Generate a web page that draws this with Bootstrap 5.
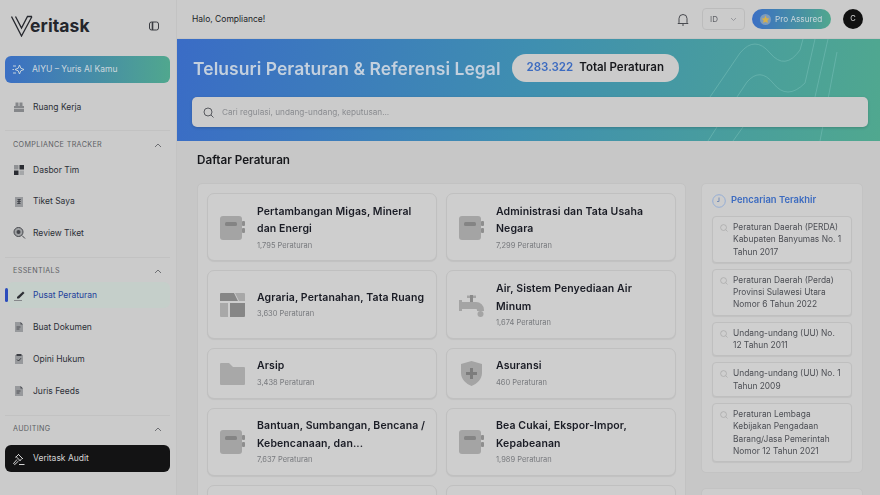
<!DOCTYPE html>
<html lang="id">
<head>
<meta charset="utf-8">
<title>Veritask</title>
<link href="https://cdn.jsdelivr.net/npm/bootstrap@5.3.0/dist/css/bootstrap.min.css" rel="stylesheet">
<style>
html,body{height:495px;overflow:hidden;background:#c8c8c8}
body{font-family:Inter,"Noto Sans",sans-serif;color:#1b1e27;font-size:10px}
.app-shell{height:495px;overflow:hidden;filter:blur(.45px)}
.side-bar{width:177px;flex:0 0 177px;background:#cbcbcb;padding:0 6px 0 5px;border-right:1px solid #c3c3c3}
.logo-row{height:52px;margin-bottom:4px;padding:0 11px 0 6px}
.logo-word{font-size:17.5px;font-weight:700;letter-spacing:.1px;margin-left:-3px;color:#24262c;line-height:1}
.ai-btn{height:27px;flex:none;border-radius:6px;background:linear-gradient(90deg,#3b6fc4,#50a78e);color:#cdd8df;font-size:8.5px;font-weight:400;padding-left:7px;gap:7px}
.nav-row{height:26px;flex:none;padding-left:7px;gap:7px;font-size:8.5px;font-weight:400;color:#2c2f37;border-radius:6px;position:relative;margin-bottom:6px}
.nav-row svg{width:14px;height:14px;flex:none}
.nav-first{margin-top:11px;margin-bottom:10px}
.nav-tight{margin-bottom:5.5px}
.nav-on{background:#c5cfca;color:#23409a;margin-left:2px;padding-left:5px;margin-top:-1.5px}
.nav-on::before{content:"";position:absolute;left:-2px;top:6px;width:3px;height:14px;background:#2c4cbc;border-radius:2px}
.nav-dark{background:#131314;color:#d5d5d5;height:27px;margin:3.5px 0 0}
.sect-head{padding:2px 8px 0;border-top:1px solid #c2c2c2;height:27px;flex:none;font-size:7.2px;letter-spacing:.35px;color:#5d5f64}
.sect-gap{margin-bottom:10.5px}
.sect-tail{height:10.5px;flex:none}
.top-bar{height:39px;flex:none;background:#cbcbcb;padding:0 17px 0 15px;font-size:8.5px;font-weight:400;border-bottom:1px solid #c4c4c4}
.lang-box{width:43px;height:22px;border:1px solid #bcbcbc;border-radius:4px;color:#606268;padding:0 7px;margin:0 7px 0 13px;font-size:8px}
.pro-pill{width:79px;height:20px;border-radius:10px;background:linear-gradient(90deg,#3b6fc4,#50a78e);color:#cbd7dc;font-size:8.2px;padding-left:8px;gap:4px}
.avatar-dot{width:20px;height:20px;border-radius:50%;background:#111;color:#d5d5d5;font-size:7.5px;margin-left:12px}
.hero-band{height:102px;flex:none;background:linear-gradient(100deg,#3a6cc6 0%,#3f8fb0 50%,#50a88f 100%);padding:15px 12px 14px 15px;position:relative;overflow:hidden}
.hero-lines{position:absolute;left:0;top:0;width:703px;height:102px}
.hero-title{font-size:17.5px;font-weight:600;color:#c3d0de;letter-spacing:.05px;line-height:28px;margin:2px 0 0 1px}
.total-pill{height:28px;border-radius:14px;background:#cbcbcb;margin-left:11px;padding:0 15px 0 15px;font-size:11.5px;font-weight:600;color:#17181c;gap:6px}
.total-pill b{font-weight:600;color:#3c6bc0}
.hero-row{position:relative;height:28px;margin-bottom:15px}
.search-box{position:relative;height:30px;background:#cbcbcb;border-radius:5px;box-shadow:0 1px 3px rgba(0,0,0,.18);padding-left:11px;gap:8px;color:#8a8c90;font-size:8.2px}
.body-zone{background:#c7c7c7;padding:0 17px 0 20px;flex:1;min-height:0;overflow:hidden}
.zone-title{font-size:11.7px;font-weight:600;color:#17181c;margin:0;height:42px;line-height:38px}
.cat-panel{width:489px;flex:none;background:#cdcdcd;border:1px solid #c2c2c2;border-radius:5px 5px 0 0;padding:9px 9px 0;height:400px}
.cat-grid{--bs-gutter-x:9px;--bs-gutter-y:9px}
.cat-card{height:100%;background:#cecece;border:1px solid #c0c0c0;border-radius:7px;box-shadow:0 1px 1px rgba(0,0,0,.06);padding:8.7px 8px 8.7px 12px;gap:12px}
.cat-card svg{width:25px;height:25px;flex:none}
.cat-name{font-size:10.5px;font-weight:600;line-height:17.5px;color:#1a1c25;letter-spacing:.1px}
.cat-count{font-size:7.5px;color:#77797d;line-height:12px;margin-top:2px}
.recent-col{width:162px;flex:none;margin-left:15px}
.recent-panel{background:#cdcdcd;border:1px solid #c3c3c3;border-radius:5px;padding:9px 10px 10px}
.recent-head{color:#3c6bc0;font-size:9.4px;font-weight:600;gap:5px;height:15px;margin-bottom:8px}
.recent-head svg{flex:none}
.recent-item{background:#cfcfcf;border:1px solid #bfbfbf;border-radius:4px;padding:4px 9px 4px 7px;gap:5px;font-size:8.4px;line-height:12.3px;color:#4c4e54;margin-bottom:6px;box-shadow:0 1px 1px rgba(0,0,0,.06)}
.recent-item:last-child{margin-bottom:0}
.recent-item svg{width:8px;height:8px;flex:none;margin-top:3px}
.next-panel{background:#cdcdcd;border:1px solid #c3c3c3;border-radius:5px;height:60px;margin-top:15px}
</style>
</head>
<body>
<div class="app-shell d-flex">
  <aside class="side-bar d-flex flex-column">
    <div class="logo-row d-flex align-items-center justify-content-between">
      <div class="d-flex align-items-center">
        <svg width="22" height="22" viewBox="0 0 22 22" fill="none" stroke="#26282e" stroke-width="1.3"><path d="M0.5 1.500 L10.500 21 L21 1.500 M4.500 1.500 L10.500 13 L16.500 1.500 H21"/></svg>
        <span class="logo-word">eritask</span>
      </div>
      <svg width="10" height="10" viewBox="0 0 10 10" fill="none" stroke="#3a3c42" stroke-width="1"><rect x=".5" y="1" width="9" height="8" rx="2"/><path d="M3.5 1v8" stroke-width="1.6"/></svg>
    </div>
    <div class="ai-btn d-flex align-items-center">
      <svg width="13" height="13" viewBox="0 0 13 13" fill="none" stroke="#d2dce0" stroke-width=".9"><path d="M7.5 2 L8.8 5.2 12 6.5 8.8 7.8 7.5 11 6.2 7.8 3 6.5 6.2 5.2Z"/><path d="M1 3h3M1 10h3M.5 6.5h1.5"/></svg>
      <span>AIYU – Yuris AI Kamu</span>
    </div>
    <div class="nav-row nav-first d-flex align-items-center">
      <svg viewBox="0 0 14 14" fill="#85878a"><path d="M2 6h1.500V2.500h3V6h1V2.500h3V6H12v6H2z"/><path d="M2 8.500h10" stroke="#c8c8c8" stroke-width=".7"/></svg>
      <span>Ruang Kerja</span>
    </div>
    <div class="sect-head d-flex align-items-center justify-content-between">
      <span>COMPLIANCE TRACKER</span>
      <svg width="8" height="5" viewBox="0 0 8 5" fill="none" stroke="#55575c" stroke-width=".8"><path d="M1 4 L4 1 L7 4"/></svg>
    </div>
    <div class="nav-row nav-tight d-flex align-items-center">
      <svg viewBox="0 0 14 14"><rect x="2" y="2" width="4.5" height="4.5" fill="#8f9194"/><rect x="7.5" y="2" width="4.5" height="4.5" fill="#2a2c32"/><rect x="2" y="7.5" width="4.5" height="4.5" fill="#2a2c32"/><rect x="7.5" y="7.5" width="4.5" height="4.5" fill="#a5a7a9"/></svg>
      <span>Dasbor Tim</span>
    </div>
    <div class="nav-row nav-tight d-flex align-items-center">
      <svg viewBox="0 0 14 14"><rect x="3" y="2" width="8" height="10" fill="#97999c"/><path d="M5.5 4.5h3l-3 2h3l-3 2h3" fill="none" stroke="#34363c" stroke-width=".8"/></svg>
      <span>Tiket Saya</span>
    </div>
    <div class="nav-row sect-gap d-flex align-items-center">
      <svg viewBox="0 0 14 14"><circle cx="6.5" cy="6" r="4.5" fill="#a0a2a4" stroke="#45474c" stroke-width="1"/><circle cx="6.5" cy="6" r="2" fill="#45474c"/><path d="M10 9.5 L13 12.5" stroke="#45474c" stroke-width="1"/></svg>
      <span>Review Tiket</span>
    </div>
    <div class="sect-head d-flex align-items-center justify-content-between">
      <span>ESSENTIALS</span>
      <svg width="8" height="5" viewBox="0 0 8 5" fill="none" stroke="#55575c" stroke-width=".8"><path d="M1 4 L4 1 L7 4"/></svg>
    </div>
    <div class="nav-row nav-on d-flex align-items-center">
      <svg viewBox="0 0 14 14"><path d="M5 9 L11 3.5 L12.5 5 L7 10.5 H5Z" fill="#2d2f35"/><path d="M2 12.5h8" stroke="#85878a" stroke-width="1"/></svg>
      <span>Pusat Peraturan</span>
    </div>
    <div class="nav-row d-flex align-items-center">
      <svg viewBox="0 0 14 14"><path d="M3 2h5.5L11 4.5V12H3Z" fill="#97999c"/><path d="M8.5 2 11 4.5H8.5Z" fill="#4b4d52"/><path d="M4.5 7h4M4.5 9h3" stroke="#3c3e44" stroke-width=".8"/></svg>
      <span>Buat Dokumen</span>
    </div>
    <div class="nav-row d-flex align-items-center">
      <svg viewBox="0 0 14 14"><rect x="3" y="3" width="8" height="9" fill="#97999c"/><rect x="4.5" y="2" width="5" height="2" fill="#3c3e44"/><path d="M5 7.5 L6.5 9 L9 6.2" fill="none" stroke="#2f3136" stroke-width=".9"/></svg>
      <span>Opini Hukum</span>
    </div>
    <div class="nav-row d-flex align-items-center mb-0">
      <svg viewBox="0 0 14 14"><path d="M3 2h5.5L11 4.5V12H3Z" fill="#97999c"/><path d="M8.5 2 11 4.5H8.5Z" fill="#4b4d52"/><path d="M4.5 7h4M4.5 9h3" stroke="#3c3e44" stroke-width=".8"/></svg>
      <span>Juris Feeds</span>
    </div>
    <div class="sect-tail"></div>
    <div class="sect-head d-flex align-items-center justify-content-between">
      <span>AUDITING</span>
      <svg width="8" height="5" viewBox="0 0 8 5" fill="none" stroke="#55575c" stroke-width=".8"><path d="M1 4 L4 1 L7 4"/></svg>
    </div>
    <div class="nav-row nav-dark d-flex align-items-center">
      <svg viewBox="0 0 14 14" fill="none" stroke="#d5d5d5" stroke-width="1"><path d="M6 2 L11 7 M4 4.5 L8.5 9 M6 3 L3.5 5.5 M10 6.5 L7.5 9 M5 7.5 L1.5 11.5 L2.8 12.5 L6.5 9 M7 12.5h5.5"/></svg>
      <span>Veritask Audit</span>
    </div>
  </aside>

  <main class="flex-grow-1 d-flex flex-column">
    <header class="top-bar d-flex align-items-center">
      <span class="me-auto">Halo, Compliance!</span>
      <svg width="12" height="13" viewBox="0 0 12 13" fill="none" stroke="#3a3c42" stroke-width=".9"><path d="M2 9.5 V5.5 a4 4 0 0 1 8 0 V9.5 L11 10.5 H1Z"/><path d="M5 12h2"/></svg>
      <div class="lang-box d-flex align-items-center justify-content-between">
        <span>ID</span>
        <svg width="7" height="5" viewBox="0 0 7 5" fill="none" stroke="#8a8c90" stroke-width=".8"><path d="M1 1 L3.5 3.5 L6 1"/></svg>
      </div>
      <div class="pro-pill d-flex align-items-center">
        <svg width="11" height="11" viewBox="0 0 11 11"><circle cx="5.5" cy="5.5" r="5.5" fill="#7d9bbd"/><path d="M5.5 1.6 L6.7 4.2 9.4 4.5 7.4 6.4 7.9 9.1 5.5 7.8 3.1 9.1 3.6 6.4 1.6 4.5 4.3 4.2Z" fill="#d7b04a"/></svg>
        <span>Pro Assured</span>
      </div>
      <div class="avatar-dot d-flex align-items-center justify-content-center">C</div>
    </header>

    <section class="hero-band">
      <svg class="hero-lines" viewBox="0 0 703 102" fill="none" stroke="#74bdb6" stroke-opacity=".6" stroke-width="1">
        <path d="M531 102 L540 88 M533 58 L563 14 Q578 -4 593 14 Q608 32 623 11 L626 0"/>
        <path d="M556 102 L566 88 M560 58 L570 43 Q583 28 596 44 Q610 62 628 44 L638 0"/>
        <path d="M638 58 L651 0"/>
        <path d="M643 102 L660 13"/>
      </svg>
      <div class="hero-row d-flex align-items-center">
        <h1 class="hero-title">Telusuri Peraturan &amp; Referensi Legal</h1>
        <div class="total-pill d-flex align-items-center"><b>283.322</b><span>Total Peraturan</span></div>
      </div>
      <div class="search-box d-flex align-items-center">
        <svg width="11" height="11" viewBox="0 0 11 11" fill="none" stroke="#4b4d52" stroke-width=".9"><circle cx="5" cy="5" r="4"/><path d="M8 8 L10.5 10.5"/></svg>
        <span>Cari regulasi, undang-undang, keputusan...</span>
      </div>
    </section>

    <div class="body-zone">
      <h2 class="zone-title">Daftar Peraturan</h2>
      <div class="d-flex align-items-start">
        <div class="cat-panel">
          <div class="row cat-grid">
            <div class="col-6"><div class="cat-card d-flex align-items-center">
              <svg viewBox="0 0 25 25"><rect x="0" y="1" width="22" height="24" rx="3" fill="#a4a4a4"/><rect x="5" y="7" width="12" height="4" rx="1.5" fill="#848484"/><rect x="22" y="6" width="3" height="5" rx="1" fill="#8e8e8e"/><rect x="22" y="13" width="3" height="5" rx="1" fill="#8e8e8e"/></svg>
              <div><div class="cat-name">Pertambangan Migas, Mineral dan Energi</div><div class="cat-count">1,795 Peraturan</div></div>
            </div></div>
            <div class="col-6"><div class="cat-card d-flex align-items-center">
              <svg viewBox="0 0 25 25"><rect x="0" y="1" width="22" height="24" rx="3" fill="#a4a4a4"/><rect x="5" y="7" width="12" height="4" rx="1.5" fill="#848484"/><rect x="22" y="6" width="3" height="5" rx="1" fill="#8e8e8e"/><rect x="22" y="13" width="3" height="5" rx="1" fill="#8e8e8e"/></svg>
              <div><div class="cat-name">Administrasi dan Tata Usaha Negara</div><div class="cat-count">7,299 Peraturan</div></div>
            </div></div>
            <div class="col-6"><div class="cat-card d-flex align-items-center">
              <svg viewBox="0 0 25 25"><path d="M0 2a1 1 0 0 1 1-1h13l4 8H0Z" fill="#868686"/><path d="M15 1h9a1 1 0 0 1 1 1v7h-6Z" fill="#a8a8a8"/><path d="M0 11h8v14H1a1 1 0 0 1-1-1Z" fill="#a8a8a8"/><path d="M10 11h15v13a1 1 0 0 1-1 1H10Z" fill="#868686"/></svg>
              <div><div class="cat-name">Agraria, Pertanahan, Tata Ruang</div><div class="cat-count">3,630 Peraturan</div></div>
            </div></div>
            <div class="col-6"><div class="cat-card d-flex align-items-center">
              <svg viewBox="0 0 25 25"><path d="M0 8h3v2h8V6H8V3.500h9V6h-3v4h3a8 8 0 0 1 8 8v1h-7v-1a1 1 0 0 0-1-1H3v2H0Z" fill="#a4a4a4"/><circle cx="21.500" cy="22" r="3" fill="#a4a4a4"/><rect x="11" y="3" width="3" height="7" fill="#8a8a8a"/></svg>
              <div><div class="cat-name">Air, Sistem Penyediaan Air Minum</div><div class="cat-count">1,674 Peraturan</div></div>
            </div></div>
            <div class="col-6"><div class="cat-card d-flex align-items-center">
              <svg viewBox="0 0 25 25"><path d="M0 3a1 1 0 0 1 1-1h8l4 4h11a1 1 0 0 1 1 1v16a1 1 0 0 1-1 1H1a1 1 0 0 1-1-1Z" fill="#a8a8a8"/></svg>
              <div><div class="cat-name">Arsip</div><div class="cat-count">3,438 Peraturan</div></div>
            </div></div>
            <div class="col-6"><div class="cat-card d-flex align-items-center">
              <svg viewBox="0 0 25 25"><path d="M12.500 0 L23 3 V12 C23 18 18 23 12.500 25 C7 23 2 18 2 12 V3Z" fill="#a4a4a4"/><path d="M11 7h3v4h4v3h-4v4h-3v-4H7v-3h4Z" fill="#7c7c7c"/></svg>
              <div><div class="cat-name">Asuransi</div><div class="cat-count">460 Peraturan</div></div>
            </div></div>
            <div class="col-6"><div class="cat-card d-flex align-items-center">
              <svg viewBox="0 0 25 25"><rect x="0" y="1" width="22" height="24" rx="3" fill="#a4a4a4"/><rect x="5" y="7" width="12" height="4" rx="1.5" fill="#848484"/><rect x="22" y="6" width="3" height="5" rx="1" fill="#8e8e8e"/><rect x="22" y="13" width="3" height="5" rx="1" fill="#8e8e8e"/></svg>
              <div><div class="cat-name">Bantuan, Sumbangan, Bencana / Kebencanaan, dan...</div><div class="cat-count">7,637 Peraturan</div></div>
            </div></div>
            <div class="col-6"><div class="cat-card d-flex align-items-center">
              <svg viewBox="0 0 25 25"><rect x="0" y="1" width="22" height="24" rx="3" fill="#a4a4a4"/><rect x="5" y="7" width="12" height="4" rx="1.5" fill="#848484"/><rect x="22" y="6" width="3" height="5" rx="1" fill="#8e8e8e"/><rect x="22" y="13" width="3" height="5" rx="1" fill="#8e8e8e"/></svg>
              <div><div class="cat-name">Bea Cukai, Ekspor-Impor, Kepabeanan</div><div class="cat-count">1,989 Peraturan</div></div>
            </div></div>
            <div class="col-6"><div class="cat-card d-flex align-items-center"><div class="cat-name">&nbsp;</div></div></div>
            <div class="col-6"><div class="cat-card d-flex align-items-center"><div class="cat-name">&nbsp;</div></div></div>
          </div>
        </div>
        <div class="recent-col">
          <div class="recent-panel">
            <div class="recent-head d-flex align-items-center">
              <svg width="14" height="14" viewBox="0 0 14 14" fill="none" stroke="#8eaad6" stroke-width=".9"><circle cx="7" cy="7" r="6.3"/><path d="M7 3.500V7.500H5" stroke="#6b87b5"/></svg>
              <span>Pencarian Terakhir</span>
            </div>
            <div class="recent-item d-flex"><svg viewBox="0 0 9 9" fill="none" stroke="#a8a8a8" stroke-width=".8"><circle cx="4" cy="4" r="3.300"/><path d="M6.500 6.500 L8.500 8.500"/></svg><span>Peraturan Daerah (PERDA) Kabupaten Banyumas No. 1 Tahun 2017</span></div>
            <div class="recent-item d-flex"><svg viewBox="0 0 9 9" fill="none" stroke="#a8a8a8" stroke-width=".8"><circle cx="4" cy="4" r="3.300"/><path d="M6.500 6.500 L8.500 8.500"/></svg><span>Peraturan Daerah (Perda) Provinsi Sulawesi Utara Nomor 6 Tahun 2022</span></div>
            <div class="recent-item d-flex"><svg viewBox="0 0 9 9" fill="none" stroke="#a8a8a8" stroke-width=".8"><circle cx="4" cy="4" r="3.300"/><path d="M6.500 6.500 L8.500 8.500"/></svg><span>Undang-undang (UU) No. 12 Tahun 2011</span></div>
            <div class="recent-item d-flex"><svg viewBox="0 0 9 9" fill="none" stroke="#a8a8a8" stroke-width=".8"><circle cx="4" cy="4" r="3.300"/><path d="M6.500 6.500 L8.500 8.500"/></svg><span>Undang-undang (UU) No. 1 Tahun 2009</span></div>
            <div class="recent-item d-flex"><svg viewBox="0 0 9 9" fill="none" stroke="#a8a8a8" stroke-width=".8"><circle cx="4" cy="4" r="3.300"/><path d="M6.500 6.500 L8.500 8.500"/></svg><span>Peraturan Lembaga Kebijakan Pengadaan Barang/Jasa Pemerintah Nomor 12 Tahun 2021</span></div>
          </div>
          <div class="next-panel"></div>
        </div>
      </div>
    </div>
  </main>
</div>
<script src="https://cdn.jsdelivr.net/npm/bootstrap@5.3.0/dist/js/bootstrap.bundle.min.js"></script>
</body>
</html>
